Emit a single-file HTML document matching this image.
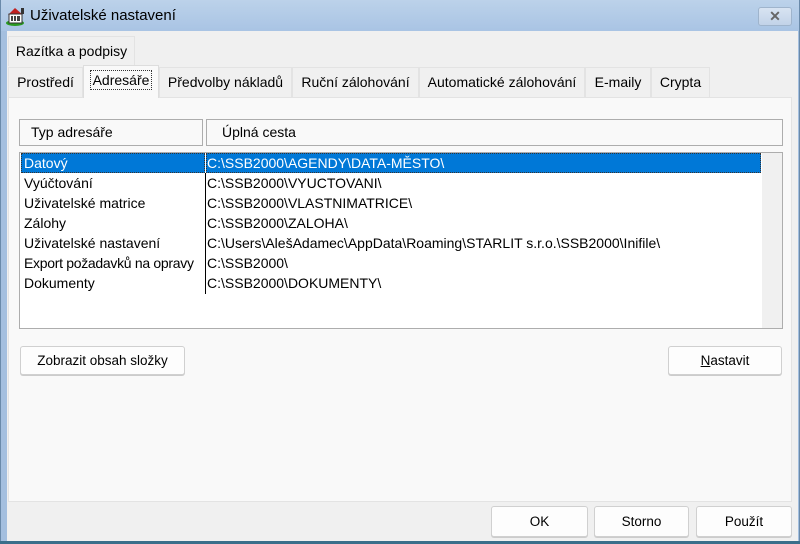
<!DOCTYPE html><html><head><meta charset="utf-8"><style>
*{box-sizing:border-box}body{margin:0;width:800px;height:544px;overflow:hidden;font-family:"Liberation Sans",sans-serif;font-size:14px;color:#000;background:#f0f0f0;position:relative}
.a{position:absolute}
.tab{position:absolute;background:#f0f0f0;border:1px solid #e3e3e3;border-bottom:none;height:30px;line-height:28px;text-align:center;font-size:14px;white-space:nowrap}
.btn{position:absolute;background:#fdfdfd;border:1px solid #d0d0d0;border-radius:3px;text-align:center;font-size:13.5px;box-shadow:0 1px 0 #ccc}
.row{position:absolute;left:0;height:20px;line-height:20px;white-space:nowrap;font-size:14px}
</style></head><body>
<div class="a" style="left:0;top:0;width:800px;height:544px;background:#a4bfdf;"></div>
<div class="a" style="left:0;top:0;width:800px;height:31px;background:linear-gradient(#bcd2ea,#a9c4e4)"></div>
<div class="a" style="left:0;top:0;width:1px;height:544px;background:#6a8aaa"></div>
<div class="a" style="left:799px;top:0;width:1px;height:544px;background:#6a8aaa"></div>
<div class="a" style="left:0;top:541px;width:800px;height:3px;background:#3a6e8a"></div>
<svg class="a" style="left:5px;top:6px" width="22" height="20" viewBox="0 0 22 20"><ellipse cx="10" cy="17" rx="9" ry="3" fill="#2a9a20"/><polygon points="3,9 10,2 18,9" fill="#c02020"/><rect x="16" y="2" width="3" height="6" fill="#333"/><rect x="4" y="8" width="13" height="9" fill="#fff" stroke="#333"/><rect x="6" y="10" width="9" height="5" fill="#444"/><rect x="8" y="10" width="1" height="5" fill="#fff"/><rect x="11" y="10" width="1" height="5" fill="#fff"/></svg>
<div class="a" style="left:30px;top:7px;font-size:15px">Uživatelské nastavení</div>
<div class="a" style="left:758px;top:7px;width:34px;height:19px;border:1px solid #9fb4cc;border-radius:3px;background:linear-gradient(#d8e4f2,#c2d3e8);text-align:center;line-height:16px;color:#666;font-weight:bold;font-size:14px">✕</div>
<div class="a" style="left:7px;top:31px;width:791px;height:510px;background:#f0f0f0"></div>
<div class="tab" style="left:8px;top:36px;width:127px">Razítka a podpisy</div>
<div class="a" style="left:8px;top:97px;width:784px;height:405px;background:#f9f9f9;border:1px solid #e3e3e3"></div>
<div class="tab" style="left:8px;top:67px;width:75px">Prostředí</div>
<div class="tab" style="left:159px;top:67px;width:133px">Předvolby nákladů</div>
<div class="tab" style="left:292px;top:67px;width:127px">Ruční zálohování</div>
<div class="tab" style="left:419px;top:67px;width:166px">Automatické zálohování</div>
<div class="tab" style="left:585px;top:67px;width:66px">E-maily</div>
<div class="tab" style="left:651px;top:67px;width:59px">Crypta</div>
<div class="tab" style="left:83px;top:65px;width:76px;height:33px;background:#f9f9f9;border-color:#ddd"><span style="border:1px dotted #333;padding:0 2px;line-height:18px;display:inline-block;margin-top:4px">Adresáře</span></div>
<div class="a" style="left:19px;top:119px;width:184px;height:27px;border:1px solid #adadad;background:#f9f9f9;line-height:25px;padding-left:11px">Typ adresáře</div>
<div class="a" style="left:206px;top:119px;width:577px;height:27px;border:1px solid #adadad;background:#f9f9f9;line-height:25px;padding-left:15px">Úplná cesta</div>
<div class="a" style="left:19px;top:152px;width:764px;height:177px;border:1px solid #adadad;background:#fff;overflow:hidden">
<div class="a" style="left:742px;top:0;width:20px;height:176px;background:#f0f0f0"></div>
<div class="a" style="left:185px;top:20px;width:1px;height:121px;background:#000"></div>
<div class="a" style="left:1px;top:0;width:184px;height:20px;background:#0078d7;outline:1px dotted #333;outline-offset:-1px"></div>
<div class="a" style="left:186px;top:0;width:555px;height:20px;background:#0078d7;outline:1px dotted #333;outline-offset:-1px"></div>
<div class="row" style="top:0;left:4px;color:#fff">Datový</div><div class="row" style="top:0;left:187px;color:#fff">C:\SSB2000\AGENDY\DATA-MĚSTO\</div>
<div class="row" style="top:20px;left:4px">Vyúčtování</div><div class="row" style="top:20px;left:187px">C:\SSB2000\VYUCTOVANI\</div>
<div class="row" style="top:40px;left:4px">Uživatelské matrice</div><div class="row" style="top:40px;left:187px">C:\SSB2000\VLASTNIMATRICE\</div>
<div class="row" style="top:60px;left:4px">Zálohy</div><div class="row" style="top:60px;left:187px">C:\SSB2000\ZALOHA\</div>
<div class="row" style="top:80px;left:4px">Uživatelské nastavení</div><div class="row" style="top:80px;left:187px">C:\Users\AlešAdamec\AppData\Roaming\STARLIT s.r.o.\SSB2000\Inifile\</div>
<div class="row" style="top:100px;left:4px;letter-spacing:-0.3px">Export požadavků na opravy</div><div class="row" style="top:100px;left:187px">C:\SSB2000\</div>
<div class="row" style="top:120px;left:4px">Dokumenty</div><div class="row" style="top:120px;left:187px">C:\SSB2000\DOKUMENTY\</div>
</div>
<div class="btn" style="left:20px;top:346px;width:165px;height:29px;line-height:27px">Zobrazit obsah složky</div>
<div class="btn" style="left:668px;top:346px;width:114px;height:29px;line-height:27px"><u>N</u>astavit</div>
<div class="btn" style="left:491px;top:506px;width:97px;height:31px;line-height:29px">OK</div>
<div class="btn" style="left:594px;top:506px;width:95px;height:31px;line-height:29px">Storno</div>
<div class="btn" style="left:696px;top:506px;width:96px;height:31px;line-height:29px">Použít</div>
</body></html>
